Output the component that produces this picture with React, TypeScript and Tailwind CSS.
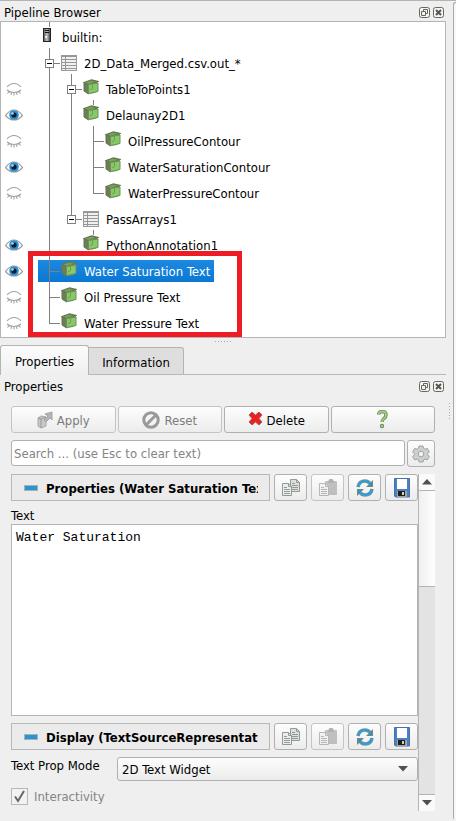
import type { ReactNode } from 'react';

const LINE = '#808080';

function Cube() {
  return (
    <svg width="16" height="16" viewBox="0 0 16 16" className="mb-1 shrink-0" aria-hidden="true">
      <path d="M1 3.500 8.500 1 15 2.500v9L12 14l-6.500 1L1 12z" fill="#7fa565" />
      <path d="M1 3.500 5.500 5.500V15L1 12z" fill="#6d7d54" stroke="#68735a" />
      <path d="M1 3.500 8.500 1 15 2.500 5.500 5.500z" fill="#76a35a" stroke="#667a52" strokeWidth="1.300" />
      <path d="M5.500 5.500 15 4v8.500l-9.500 2z" fill="#86c966" stroke="#6f8f5c" />
      <path d="M9.500 5v4.500L7 11" fill="none" stroke="#68a04c" />
    </svg>
  );
}

function TableIcon() {
  return (
    <svg width="16" height="16" viewBox="0 0 16 16" className="shrink-0" aria-hidden="true">
      <rect x="0.5" y="0.5" width="15" height="15" fill="#f0f0f0" stroke="#999" />
      <path d="M1 1.500h14M1 4.500h14M1 7.500h14M1 10.500h14M1 13.500h14M4.500 1v14" stroke="#969696" fill="none" />
    </svg>
  );
}

function ServerIcon() {
  return (
    <svg width="16" height="16" viewBox="0 0 16 16" className="mb-1 shrink-0" aria-hidden="true">
      <defs>
        <linearGradient id="srv" x1="0" x2="1">
          <stop offset="0" stopColor="#555" />
          <stop offset="0.5" stopColor="#c4c4c4" />
          <stop offset="1" stopColor="#333" />
        </linearGradient>
      </defs>
      <rect x="4.5" y="1.5" width="7" height="13" fill="url(#srv)" stroke="#222" />
      <path d="M6 3.500h4M6 5.500h4" stroke="#111" />
      <rect x="6" y="9" width="2" height="2" fill="#eee" />
    </svg>
  );
}

function Eye({ open }: { open: boolean }) {
  return open ? (
    <svg width="18" height="14" viewBox="0 0 18 14" aria-hidden="true">
      <path d="M.5 7.500Q4.500 2 9 2t8.500 5.500Q13.500 12 9 12T.5 7.500z" fill="#fff" stroke="#999" strokeWidth="1.200" />
      <circle cx="9" cy="7" r="4.800" fill="#2b8fd0" />
      <circle cx="9" cy="7" r="2.600" fill="#0a1a2a" />
      <circle cx="7.500" cy="5.500" r="1.300" fill="#a9d8f5" />
    </svg>
  ) : (
    <svg width="18" height="14" viewBox="0 0 18 14" aria-hidden="true">
      <path
        d="M2 5Q5 1.500 9 1.500T16 5M2 8q3 2.500 7 2.500T16 8M4 9.500 2.500 11.500M6.500 10.500 6 13M9 10.500V13.500M11.500 10.500l.5 2.500M14 9.500l1.500 2"
        fill="none"
        stroke="#a0a0a0"
        strokeWidth="1.100"
      />
    </svg>
  );
}

/* Branch cells: n = blank, v = line through, t = tee, e = elbow, x = expander, z = last expander */
type Cell = 'n' | 'v' | 't' | 'e' | 'x' | 'z';

function Branch({ kind }: { kind: Cell }) {
  const box = kind === 'x' || kind === 'z';
  const full = kind === 'v' || kind === 't' || kind === 'x';
  return (
    <svg width="22" height="26" viewBox="0 0 22 26" className="shrink-0" aria-hidden="true">
      {kind !== 'n' && <path d={full ? 'M11.500 0v26' : 'M11.500 0v15.500'} stroke={LINE} />}
      {kind !== 'n' && kind !== 'v' && <path d="M11 15.500h11" stroke={LINE} />}
      {box && <rect x="7.500" y="11.500" width="8" height="8" fill="#fff" stroke={LINE} />}
      {box && <path d="M9 15.500h5" stroke="#000" />}
    </svg>
  );
}

type Node = {
  label: string;
  cells: Cell[];
  icon: 'server' | 'table' | 'cube';
  eye?: boolean;
  selected?: boolean;
  above?: boolean;
};

const NODES: Node[] = [
  { label: 'builtin:', cells: [], icon: 'server', above: true },
  { label: '2D_Data_Merged.csv.out_*', cells: ['x'], icon: 'table' },
  { label: 'TableToPoints1', cells: ['v', 'x'], icon: 'cube', eye: false },
  { label: 'Delaunay2D1', cells: ['v', 'v'], icon: 'cube', eye: true, above: true },
  { label: 'OilPressureContour', cells: ['v', 'v', 't'], icon: 'cube', eye: false },
  { label: 'WaterSaturationContour', cells: ['v', 'v', 't'], icon: 'cube', eye: true },
  { label: 'WaterPressureContour', cells: ['v', 'v', 'e'], icon: 'cube', eye: false },
  { label: 'PassArrays1', cells: ['v', 'z'], icon: 'table' },
  { label: 'PythonAnnotation1', cells: ['v', 'n'], icon: 'cube', eye: true, above: true },
  { label: 'Water Saturation Text', cells: ['t'], icon: 'cube', eye: true, selected: true },
  { label: 'Oil Pressure Text', cells: ['t'], icon: 'cube', eye: false },
  { label: 'Water Pressure Text', cells: ['e'], icon: 'cube', eye: false },
];

function TreeRow({ node }: { node: Node }) {
  return (
    <li className="flex h-[26px]">
      <span className="flex w-[37px] shrink-0 items-center pt-1 pl-1">
        {node.eye !== undefined && (
          <button aria-label={`Toggle ${node.label}`}>
            <Eye open={node.eye} />
          </button>
        )}
      </span>
      <span
        className={
          node.selected
            ? 'flex bg-[linear-gradient(transparent_4px,#1c88e0_4px,#0a78d4)] pr-1 text-white'
            : 'flex pr-1'
        }
      >
        {node.cells.map((c, i) => (
          <Branch key={i} kind={c} />
        ))}
        <span
          className={
            node.above
              ? 'flex items-center bg-[linear-gradient(#808080,#808080)] bg-[length:1px_5px] bg-[position:11px_0] bg-no-repeat pt-1 pl-px'
              : 'flex items-center pt-1 pl-px'
          }
        >
          {node.icon === 'server' ? <ServerIcon /> : node.icon === 'table' ? <TableIcon /> : <Cube />}
          <span className="pt-[2px] pl-[7px] leading-5 whitespace-nowrap">{node.label}</span>
        </span>
      </span>
    </li>
  );
}

function TitleBar({ title }: { title: string }) {
  return (
    <div className="flex h-5 items-center justify-between pr-[2px] pl-1">
      <h2 className="pt-[2px] leading-5">{title}</h2>
      <div className="flex gap-[3px]">
        <button aria-label="Float panel">
          <svg width="11" height="11" viewBox="0 0 11 11">
            <rect x="0.5" y="0.5" width="10" height="10" rx="2" fill="#f4f4f4" stroke="#666860" />
            <path d="M2.500 4.500h4v4h-4zM4.500 4V2.500h4v4H7" fill="none" stroke="#666860" />
          </svg>
        </button>
        <button aria-label="Close panel">
          <svg width="11" height="11" viewBox="0 0 11 11">
            <rect x="0.5" y="0.5" width="10" height="10" rx="2" fill="#f4f4f4" stroke="#666860" />
            <path d="m3 3 5 5M8 3 3 8" stroke="#555750" strokeWidth="2" />
          </svg>
        </button>
      </div>
    </div>
  );
}

const BTN =
  'flex items-center justify-center rounded-[3px] border border-[#b0b0b0] bg-linear-to-b from-[#fdfdfd] to-[#ececec]';

function ActionButton({ icon, label, disabled }: { icon: ReactNode; label?: string; disabled?: boolean }) {
  return (
    <button
      disabled={disabled}
      aria-label={label ?? 'Help'}
      className={`${BTN} h-[27px] flex-1 gap-1 disabled:border-[#c4c4c4] disabled:text-[#7c7c7c]`}
    >
      {icon}
      {label && <span className="pt-[2px]">{label}</span>}
    </button>
  );
}

function Page({ x, y, fill }: { x: number; y: number; fill: string }) {
  return (
    <g transform={`translate(${x} ${y})`}>
      <path d="M.5.5h6l3 3v9h-9z" fill={fill} stroke="#929a94" />
      <path d="M6.500.5v3h3M2 4.500h3M2 6.500h6M2 8.500h6M2 10.500h6" fill="none" stroke="#929a94" />
    </g>
  );
}

function SectionHeader({ title }: { title: string }) {
  return (
    <div className="flex gap-1">
      <button className="flex h-[27px] min-w-0 flex-1 items-center border border-[#b8b8b8] bg-[#ebebeb] pr-[11px] pl-3 text-left font-bold">
        <span className="mr-2 h-[6px] w-[14px] shrink-0 border border-[#9db4b8] bg-[#2d93cc]" />
        <span className="overflow-hidden pt-[2px] leading-5 whitespace-nowrap">{title}</span>
      </button>
      <button aria-label="Copy" className={`${BTN} h-[27px] w-[33px]`}>
        <svg width="18" height="18" viewBox="0 0 18 18">
          <Page x={8} y={0} fill="#dde1de" />
          <Page x={0} y={4} fill="#eceeec" />
        </svg>
      </button>
      <button aria-label="Paste" disabled className={`${BTN} h-[27px] w-[33px] disabled:border-[#c4c4c4]`}>
        <svg width="18" height="18" viewBox="0 0 18 18" opacity="0.65">
          <rect x="6" y="2" width="12" height="14" rx="1" fill="#a4a4a4" />
          <path d="M9 2.500 10.500 0h3L15 2.500V4H9z" fill="#8c8c8c" />
          <Page x={0} y={4} fill="#f0f0f0" />
        </svg>
      </button>
      <button aria-label="Reload" className={`${BTN} h-[27px] w-[33px]`}>
        <svg width="18" height="18" viewBox="0 0 18 18">
          <path d="M2 8Q3 2 9 2q3 0 5 2.500M16 10q-1 6-7 6-3 0-5-2.500" fill="none" stroke="#7b8f95" strokeWidth="3.600" />
          <path d="M17 1v7h-7zM1 17v-7h7z" fill="#7b8574" />
          <path d="M2 8Q3 2 9 2q3 0 5 2.500M16 10q-1 6-7 6-3 0-5-2.500" fill="none" stroke="#2d9fd8" strokeWidth="2.200" />
          <path d="M16 3v4h-4zM2 15v-4h4z" fill="#2d93cc" />
        </svg>
      </button>
      <button aria-label="Save" className={`${BTN} h-[27px] w-[33px]`}>
        <svg width="18" height="20" viewBox="0 0 18 20">
          <path d="M1.500.5h15v18.500h-14l-1-1z" fill="#4c80c4" stroke="#4a70ac" />
          <rect x="4" y="1" width="10" height="10" fill="#fff" />
          <rect x="4" y="13" width="10" height="6" fill="#a4a49e" />
          <rect x="5" y="13" width="7" height="5" fill="#1c1c1c" />
          <rect x="9" y="14" width="2" height="3" fill="#d8d4b8" />
        </svg>
      </button>
    </div>
  );
}

const HELP_MARK = 'M2.500 4.500Q3 1.500 6 1.500q4 0 4 3.500 0 2-2 3.500T6 12';

export default function App() {
  return (
    <div className="flex min-h-screen border-t border-[#b4b4b4] bg-[#efefef] font-['DejaVu_Sans_Condensed','DejaVu_Sans',sans-serif] text-[13px] text-black">
      <main className="flex min-w-0 flex-1 flex-col">
        <section className="pt-px">
          <div className="h-[19px]">
            <TitleBar title="Pipeline Browser" />
          </div>
          <div className="relative border border-[#b4b4b4] bg-white pb-[3px]">
            <ul>
              {NODES.map((n) => (
                <TreeRow key={n.label} node={n} />
              ))}
            </ul>
            <div className="pointer-events-none absolute top-[229px] left-[27px] h-[86px] w-[214px] border-5 border-[#ee1c24]" />
          </div>
        </section>

        <div className="flex h-[7px] items-center justify-center gap-[2px]">
          {[0, 1, 2, 3, 4, 5].map((i) => (
            <span key={i} className="size-px bg-[#a8a8a8]" />
          ))}
        </div>

        <div role="tablist" className="flex h-[30px] items-end border-b border-[#b8b8b8]">
          <button
            role="tab"
            aria-selected="true"
            className="-mb-px h-[30px] w-[89px] rounded-t-[3px] border border-b-0 border-[#b4b4b4] bg-linear-to-b from-[#fcfcfc] to-[#efefef] pt-[2px]"
          >
            Properties
          </button>
          <button
            role="tab"
            aria-selected="false"
            className="h-[27px] w-[95px] rounded-tr-[3px] border border-b-0 border-l-0 border-[#b4b4b4] bg-[#dedede] pt-1"
          >
            Information
          </button>
        </div>

        <section>
          <div className="pt-px">
            <TitleBar title="Properties" />
          </div>
          <div className="px-[11px] pt-[10px]">
            <div className="flex gap-[2px]">
              <ActionButton
                disabled
                label="Apply"
                icon={
                  <svg width="16" height="18" viewBox="0 0 16 18">
                    <path d="M1 7 4 5l5 1v9l-5 2-3-2z" fill="#c8c8c8" stroke="#a8a8a8" />
                    <path d="M1 7l3 1v9M4 8l5-2" fill="none" stroke="#999" />
                    <path d="M7 9l4-4-3-2 7-2v8l-2-2-4 4z" fill="#b4b4b4" stroke="#a4a4a4" />
                  </svg>
                }
              />
              <ActionButton
                disabled
                label="Reset"
                icon={
                  <svg width="18" height="18" viewBox="0 0 18 18">
                    <circle cx="9" cy="9" r="7.200" fill="none" stroke="#999" strokeWidth="3" />
                    <path d="m4 14 10-10" stroke="#999" strokeWidth="3" />
                  </svg>
                }
              />
              <ActionButton
                label="Delete"
                icon={
                  <svg width="15" height="15" viewBox="0 0 15 15" className="mb-[2px]">
                    <path d="m1 4 3-3 3.500 3L11 1l3 3-3 3.500 3 3.500-3 3-3.500-3L4 14l-3-3 3-3.500z" fill="#f01e20" stroke="#98645a" />
                  </svg>
                }
              />
              <ActionButton
                icon={
                  <svg width="13" height="19" viewBox="0 0 13 19">
                    <path d={HELP_MARK} fill="none" stroke="#728464" strokeWidth="3.400" />
                    <circle cx="6" cy="16" r="2.200" fill="#728464" />
                    <path d={HELP_MARK} fill="none" stroke="#9bd07a" strokeWidth="1.800" />
                    <circle cx="6" cy="16" r="1.300" fill="#9bd07a" />
                  </svg>
                }
              />
            </div>

            <div className="flex gap-[2px] pt-[7px]">
              <input
                type="text"
                aria-label="Search"
                placeholder="Search ... (use Esc to clear text)"
                className="h-[26px] min-w-0 flex-1 rounded-[3px] border border-[#b0b0b0] bg-white px-[2px] pt-px placeholder:text-[#848484]"
              />
              <button aria-label="Advanced properties" className={`${BTN} h-[27px] w-7`}>
                <svg width="18" height="18" viewBox="0 0 18 18">
                  <path
                    d="M7 1h4l.6 2.400 1.400.8L15.400 3.500l2 3.400L15.600 8.700v1l1.800 1.800-2 3.300-2.400-.7-1.400.8L11 17H7l-.6-2.100-1.400-.8-2.400.7-2-3.300 1.800-1.800v-1L.6 6.900l2-3.400 2.400.7 1.400-.8z"
                    fill="#cccfcd"
                    stroke="#a0a3a1"
                  />
                  <circle cx="9" cy="9" r="2.800" fill="#f2f2f2" stroke="#a0a3a1" />
                </svg>
              </button>
            </div>

            <div className="flex pt-[7px]">
              <div className="min-w-0 flex-1">
                <SectionHeader title="Properties (Water Saturation Text)" />
                <label htmlFor="source-text" className="block pt-[7px] leading-4">
                  Text
                </label>
                <textarea
                  id="source-text"
                  defaultValue="Water Saturation"
                  className="block h-[192px] w-full resize-none border border-[#b4b4b4] bg-white px-1 py-[5px] font-['Liberation_Mono',monospace] text-[13px] leading-4"
                />
                <div className="pt-[7px]">
                  <SectionHeader title="Display (TextSourceRepresentation)" />
                </div>
                <div className="flex pt-[7px]">
                  <label htmlFor="prop-mode" className="w-[106px] shrink-0 leading-[18px]">
                    Text Prop Mode
                  </label>
                  <div className="relative min-w-0 flex-1">
                    <select
                      id="prop-mode"
                      className="h-6 w-full appearance-none rounded-[3px] border border-[#b0b0b0] bg-linear-to-b from-[#fdfdfd] to-[#ececec] px-1 pt-px"
                    >
                      <option>2D Text Widget</option>
                    </select>
                    <svg width="10" height="6" viewBox="0 0 10 6" className="pointer-events-none absolute top-[9px] right-[10px]">
                      <path d="M0 0h10L5 5.500z" fill="#505050" />
                    </svg>
                  </div>
                </div>
                <label className="flex items-center gap-[6px] pt-[6px] leading-[17px] text-[#848484]">
                  <span className="relative flex size-[17px]">
                    <input
                      type="checkbox"
                      defaultChecked
                      disabled
                      className="size-[17px] appearance-none border border-[#b8b8b8] bg-[#f2f2f2]"
                    />
                    <svg width="17" height="17" viewBox="0 0 17 17" className="pointer-events-none absolute inset-0">
                      <path d="M4 8.500 7 13l6-10" fill="none" stroke="#666" strokeWidth="2" />
                    </svg>
                  </span>
                  <span className="pt-px">Interactivity</span>
                </label>
              </div>

              <div className="flex h-[337px] w-[17px] flex-col border-l border-[#b4b4b4] bg-[#e3e3e3]">
                <button aria-label="Scroll up" className="flex h-4 items-center justify-center bg-[#fafafa]">
                  <svg width="10" height="6" viewBox="0 0 10 6">
                    <path d="M0 5.500h10L5 0z" fill="#505050" />
                  </svg>
                </button>
                <div className="h-[97px] border-y border-[#b4b4b4] bg-linear-to-r from-[#f0f0f0] to-white" />
                <div className="flex-1" />
                <button
                  aria-label="Scroll down"
                  className="flex h-[17px] items-center justify-center border-t border-[#b4b4b4] bg-[#fafafa]"
                >
                  <svg width="10" height="6" viewBox="0 0 10 6">
                    <path d="M0 0h10L5 5.500z" fill="#505050" />
                  </svg>
                </button>
              </div>
            </div>
          </div>
        </section>
      </main>

      <aside className="flex w-[10px] shrink-0 pt-px pb-[2px]">
        <div className="flex w-[7px] flex-col items-center justify-center gap-[2px]">
          {[0, 1, 2, 3, 4, 5].map((i) => (
            <span key={i} className="size-px bg-[#a8a8a8]" />
          ))}
        </div>
        <div className="flex-1 rounded-tl-[3px] border-t border-l border-[#a8a8a8] bg-[#f8f8f8]" />
      </aside>
    </div>
  );
}
